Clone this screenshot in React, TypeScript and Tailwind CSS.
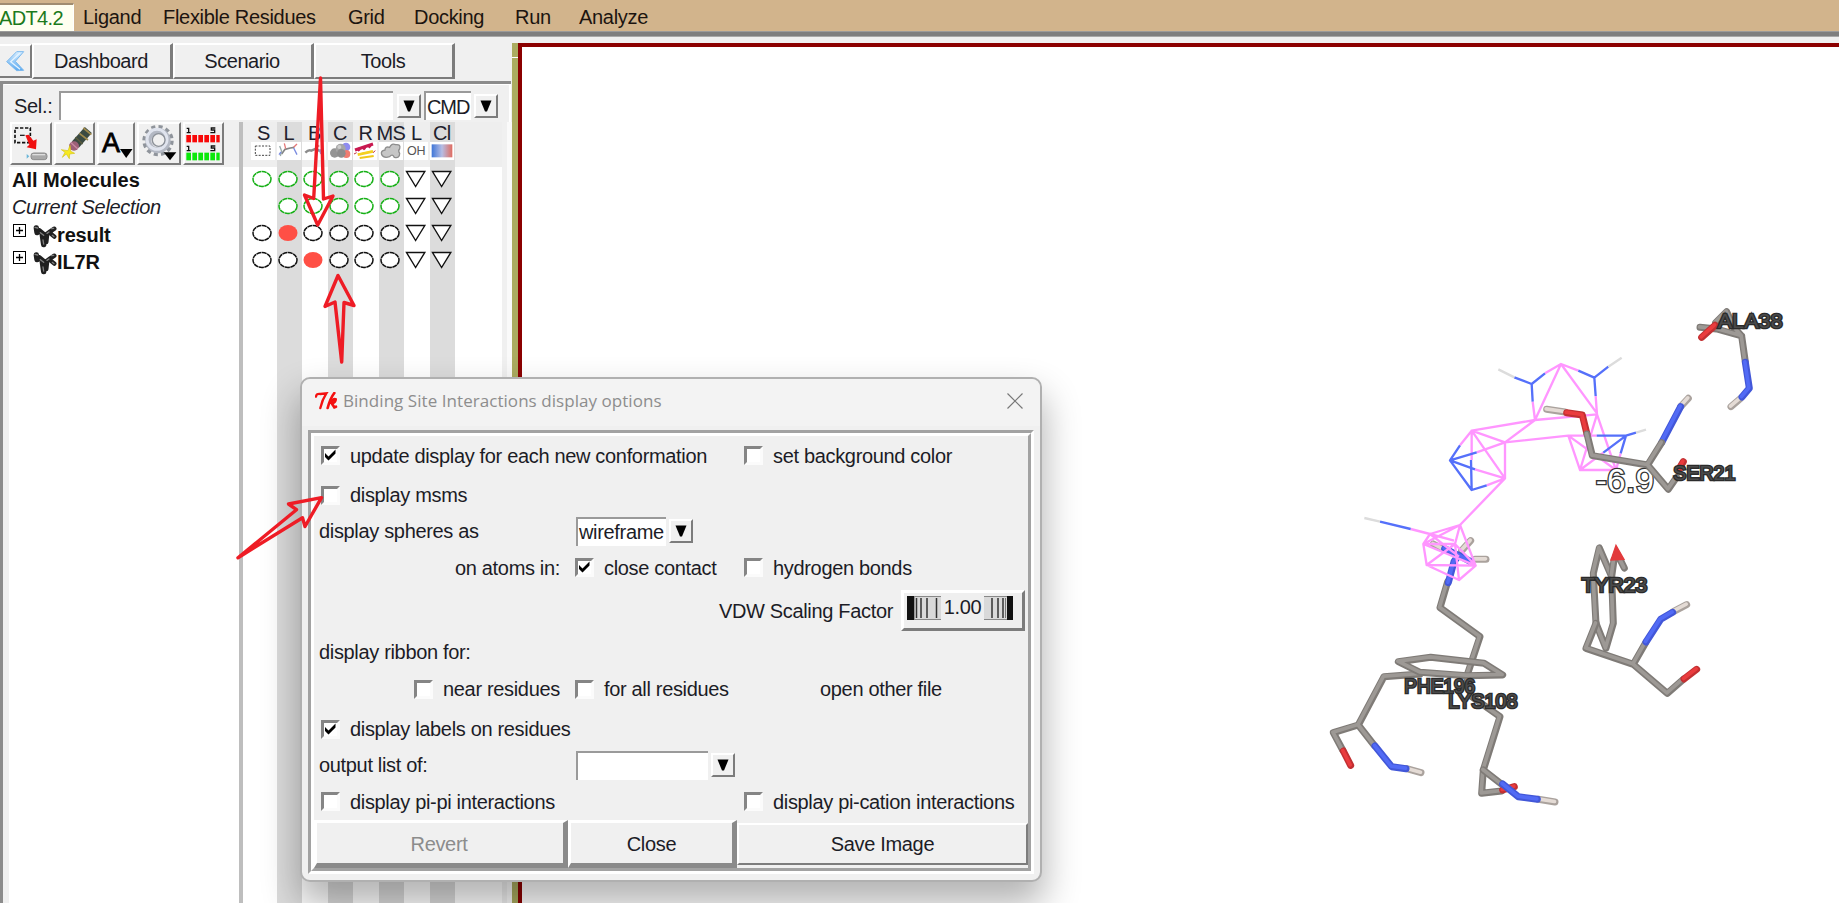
import React from "react";

const raised = "border-2 border-t-white border-l-white border-r-[#7c7c7c] border-b-[#7c7c7c] bg-[#f0f0f0]";

const menus = [
  { label: "Ligand", cls: "w-[80px]" },
  { label: "Flexible Residues", cls: "w-[185px]" },
  { label: "Grid", cls: "w-[66px]" },
  { label: "Docking", cls: "w-[101px]" },
  { label: "Run", cls: "w-[64px]" },
  { label: "Analyze", cls: "w-[90px]" },
];

function MenuBar() {
  return (
    <div className="flex h-[31px] shrink-0 items-end bg-[#d2b48c] text-[#1c1410]">
      <div className="flex h-[28px] w-[74px] items-center border-t-2 border-r border-t-[#a08c70] border-r-white bg-[#fffff0] text-[#1c7a1c]">
        <span className="-mt-px -ml-px tracking-[-0.650px]">ADT4.2</span>
      </div>
      <div className="flex h-[28px] items-center pl-[9px] tracking-[-0.300px]">
        {menus.map((m) => (
          <div key={m.label} className={`shrink-0 whitespace-nowrap ${m.cls}`}>{m.label}</div>
        ))}
      </div>
    </div>
  );
}

function DropButton() {
  return (
    <div className={`flex h-[24px] w-[24px] shrink-0 items-center justify-center ${raised}`}>
      <svg width="12" height="12" viewBox="0 0 12 12"><path d="M0.500 0.500H11.500L7 11.500H5Z" fill="#000" /></svg>
    </div>
  );
}

function Tabs() {
  return (
    <div className="flex h-[36px] items-start">
      <div className={`mt-px flex h-[34px] w-[32px] items-center justify-center ${raised} border-l-0`}>
        <svg width="20" height="22" viewBox="16 148 58 66">
          <defs>
            <linearGradient id="chev" x1="0" y1="0" x2="0" y2="1">
              <stop offset="0" stopColor="#d6edff" /><stop offset="1" stopColor="#5aa9f0" />
            </linearGradient>
          </defs>
          <path d="M71 153L50 153L20 183L50 210L71 209L46 182Z" fill="url(#chev)" stroke="#7ab8ee" strokeWidth="3" strokeLinejoin="round" />
          <path d="M60 157L32 183L60 206" fill="none" stroke="#e4f3ff" strokeWidth="4" />
        </svg>
      </div>
      {["Dashboard", "Scenario", "Tools"].map((t) => (
        <div key={t} className={`flex h-[36px] w-[141px] items-center justify-center pr-[2px] tracking-[-0.450px] ${raised} border-r-[3px]`}>{t}</div>
      ))}
    </div>
  );
}

function Toolbar() {
  return (
    <div className="flex h-[45px] gap-[2px] pl-[6px]">
      <div className={`h-[43px] w-[42px] ${raised}`}>
        <svg width="38" height="39" viewBox="34 42 114 117">
          <rect x="43" y="54" width="46" height="44" fill="none" stroke="#111" strokeWidth="5" strokeDasharray="10 5" />
          <path d="M58 76h14" stroke="#222" strokeWidth="4" />
          <path d="M74 76L84 74L98 92L108 88L106 118L78 112L86 104Z" fill="#f01010" />
          <path d="M78 132l8 7l-8 7z" fill="#6bb6d8" />
          <rect x="91" y="129" width="48" height="20" rx="8" fill="#a9a9a9" stroke="#8c8c8c" strokeWidth="3" />
          <path d="M95 134h38" stroke="#dedede" strokeWidth="4" />
        </svg>
      </div>
      <div className={`h-[43px] w-[41px] ${raised}`}>
        <svg width="37" height="39" viewBox="168 42 111 117">
          <path d="M265 60L226 104" stroke="#3b4a42" strokeWidth="28" />
          <path d="M238 70l26 20M250 54l24 20" stroke="#a08a4c" strokeWidth="5" />
          <path d="M226 82l22 20" stroke="#5c5c3c" strokeWidth="4" />
          <ellipse cx="222" cy="108" rx="15" ry="14" fill="#9d6078" />
          <path d="M213 98l20 18" stroke="#c98aa0" strokeWidth="4" />
          <path d="M184 119L204 122L210 106L212 124L224 130L209 132L208 146L199 132L187 142L195 127Z" fill="#f7ea1e" stroke="#d5c416" strokeWidth="2" />
        </svg>
      </div>
      <div className={`h-[43px] w-[38px] ${raised}`}>
        <div className="flex h-[39px] items-start justify-between pt-[6px] pl-[3px]">
          <span className="text-[27px] leading-none font-normal tracking-normal text-black [-webkit-text-stroke:0.800px_black]">A</span>
          <svg className="-ml-1 self-end pb-[5px]" width="13" height="14" viewBox="0 0 13 9"><path d="M0 0H12.500L6.200 9Z" fill="#000" /></svg>
        </div>
      </div>
      <div className={`h-[43px] w-[44px] ${raised}`}>
        <svg width="40" height="39" viewBox="420 42 120 117">
          <circle cx="477" cy="92" r="41" fill="none" stroke="#8f949b" strokeWidth="12" strokeDasharray="12 9.500" />
          <circle cx="477" cy="92" r="29" fill="none" stroke="#b3b8c3" strokeWidth="18" />
          <circle cx="474" cy="88" r="30" fill="none" stroke="#e0e4ee" strokeWidth="9" />
          <circle cx="479" cy="90" r="19" fill="#f0f0f0" stroke="#8b9098" strokeWidth="4" />
          <path d="M494 127h38l-19 24z" fill="#000" />
        </svg>
      </div>
      <div className={`h-[43px] w-[41px] ${raised}`}>
        <svg width="37" height="39" viewBox="555 42 111 117">
          {[0, 1, 2, 3, 4, 5].map((i) => (
            <g key={i}>
              <rect x={559 + i * 18} y="75" width={i === 5 ? 10 : 14} height="22" fill="#f80808" />
              <rect x={559 + i * 18} y="128" width={i === 5 ? 10 : 14} height="23" fill="#0be80b" />
            </g>
          ))}
          {[52, 106].map((y) => (
            <g key={y} transform={`translate(0 ${y})`} fill="none" stroke="#111" strokeWidth="4">
              <path d="M560 3h6v13M560 16h12" />
              <path d="M646 2h-12v6h10v8h-13" />
            </g>
          ))}
        </svg>
      </div>
    </div>
  );
}

function MolIcon() {
  return (
    <svg width="24" height="24" viewBox="100 340 72 72">
      <g stroke="#202020" strokeLinecap="round" strokeLinejoin="round" fill="none">
        <path d="M110 352L112 366M118 360L138 376M128 374L132 402" strokeWidth="16" />
        <path d="M136 374L152 362L164 354M152 368L164 378M142 376L140 394" strokeWidth="13" />
      </g>
      <path d="M106 350l8 2M122 366l10 8M156 354l6-1M158 374l5 4M130 388l2 12M142 368l6-4" stroke="#808080" strokeWidth="4" strokeLinecap="round" />
    </svg>
  );
}

function TreeItem({ name }: { name: string }) {
  return (
    <div className="flex h-[27px] items-center pl-[4px]">
      <div className="mb-[8px] flex h-[13px] w-[13px] items-center justify-center border border-black">
        <svg width="9" height="9" viewBox="0 0 9 9"><path d="M4.500 1V8M1 4.500H8" stroke="#000" strokeWidth="1.300" /></svg>
      </div>
      <div className="mt-[2px] ml-[7px] flex"><MolIcon /></div>
      <span className="text-[20px] font-bold tracking-[-0.150px] text-[#111]">{name}</span>
    </div>
  );
}

const iconArt: Record<string, React.ReactNode> = {
  S: <rect x="13" y="12" width="44" height="28" fill="none" stroke="#444" strokeWidth="3" strokeDasharray="6 4" />,
  L: (
    <g fill="none" strokeWidth="4">
      <path d="M14 36L24 22L40 18L52 16" stroke="#858585" strokeWidth="5" /><path d="M8 12l6 16-4 14" stroke="#9aa" />
      <path d="M22 4l4 16M50 16l10-10" stroke="#e57878" /><path d="M50 18l10 20M12 30l-6 8" stroke="#7a8be0" />
    </g>
  ),
  B: (
    <g fill="none" strokeWidth="7">
      <path d="M10 32Q20 22 28 26L42 20L54 28" stroke="#8c8c8c" /><path d="M42 12h10" stroke="#e08080" /><path d="M54 22l4 14" stroke="#8f9be0" />
    </g>
  ),
  C: (
    <g>
      <circle cx="54" cy="15" r="13" fill="#8f8cf0" /><circle cx="55" cy="36" r="12" fill="#f07c70" />
      <circle cx="20" cy="33" r="14" fill="#949494" /><circle cx="38" cy="20" r="15" fill="#a6a6a6" /><circle cx="40" cy="34" r="13" fill="#8d8d8d" />
      <circle cx="34" cy="15" r="6" fill="#ccc" />
    </g>
  ),
  R: (
    <g fill="none">
      <path d="M6 24L60 6" stroke="#c81850" strokeWidth="9" /><path d="M14 26l6-6M30 22l6-6M46 16l6-6" stroke="#c81850" strokeWidth="9" />
      <path d="M14 38l46-10" stroke="#f4d020" strokeWidth="8" /><path d="M20 48l42-6" stroke="#f0c818" strokeWidth="6" />
      <path d="M14 32l46-12" stroke="#fff" strokeWidth="3" /><path d="M3 36l8-4M60 32l7-6" stroke="#c03040" strokeWidth="3" />
    </g>
  ),
  MS: (
    <path d="M8 38Q4 26 18 24Q18 12 32 16Q38 2 50 8Q66 6 62 20Q56 26 62 34Q62 50 46 46Q40 34 32 44Q14 50 8 38Z" fill="#c6c6c6" stroke="#8d8d8d" strokeWidth="4" />
  ),
  Cl: (
    <g>
      <defs><linearGradient id="clg"><stop offset="0" stopColor="#3f76d8" /><stop offset=".5" stopColor="#b6bde4" /><stop offset="1" stopColor="#e06c60" /></linearGradient></defs>
      <rect x="5" y="7" width="62" height="39" fill="url(#clg)" />
    </g>
  ),
};

const columns = [
  { id: "S", label: "S" }, { id: "L", label: "L" }, { id: "B", label: "B" }, { id: "C", label: "C" },
  { id: "R", label: "R" }, { id: "MS", label: "MS" }, { id: "OH", label: "L" }, { id: "Cl", label: "Cl" },
];

function Marker({ col, row }: { col: number; row: number }) {
  if (row === 1 && col === 0) return <div className="h-[27px]" />;
  const hot = (row === 2 && col === 1) || (row === 3 && col === 2);
  const color = row < 2 ? "#16b016" : "#111";
  return (
    <div className="flex h-[27px] items-center">
      <svg width="24" height="20" viewBox="0 0 24 20">
        {col > 5 ? (
          <path d="M2.500 2.500H20.800L11.600 17.500Z" fill="#fff" stroke="#111" strokeWidth="1.400" />
        ) : hot ? (
          <ellipse cx="11" cy="10" rx="9.500" ry="8" fill="#ff4f45" />
        ) : (
          <ellipse cx="11" cy="10" rx="9" ry="7.500" fill="#fff" stroke={color} strokeWidth="1.500" strokeDasharray="5 0.500" />
        )}
      </svg>
    </div>
  );
}

function Matrix() {
  return (
    <div className="flex h-full w-[259px] bg-[linear-gradient(#eee_45px,#fff_45px)] pl-[8px]">
      {columns.map((c, i) => (
        <div key={c.id + i} className={`h-full w-[25.500px] shrink-0 ${i % 2 ? "bg-[#dcdcdc]" : ""}`}>
          <div className="-ml-px flex h-[43px] flex-col items-center pt-[1px]">
            <div className="flex h-[19px] items-center justify-center text-[20px] tracking-[-0.700px] whitespace-nowrap text-[#20202c]">{c.label}</div>
            <div className="flex h-[18px] w-[24px] items-center justify-center bg-white">
              {c.id === "OH" ? (
                <span className="text-[12.500px] leading-none tracking-normal text-[#555]">OH</span>
              ) : (
                <svg width="24" height="18" viewBox="0 0 72 54">{iconArt[c.id]}</svg>
              )}
            </div>
          </div>
          {[0, 1, 2, 3].map((r) => <Marker key={r} col={i} row={r} />)}
        </div>
      ))}
    </div>
  );
}

function Sidebar() {
  return (
    <div className="flex w-[512px] shrink-0 flex-col pt-[6px]">
      <Tabs />
      <div className="mt-[2px] flex min-h-0 flex-1 flex-col border-l-[3px] border-[#8c8c8c] pl-px">
        <div className="-ml-px h-[3px] w-[508px] shrink-0 bg-[#8c8c8c]" />
        <div className="flex h-[38px] w-[507px] shrink-0 items-start border-t border-r-2 border-white pt-[6px] pl-[10px]">
          <div className="flex h-[29px] w-[45px] items-center">Sel.:</div>
          <div className="h-[29px] w-[334px] border-t-2 border-l-2 border-[#9a9a9a] bg-white" />
          <div className="ml-[4px] flex h-[29px] items-center"><DropButton /></div>
          <div className="ml-[3px] flex h-[29px] w-[47px] items-center border-t-2 border-l-2 border-[#9a9a9a] bg-white pl-px tracking-[-1.100px]">CMD</div>
          <div className="ml-[3px] flex h-[29px] items-center"><DropButton /></div>
        </div>
        <div className="flex min-h-0 flex-1">
          <div className="flex w-[235px] flex-col">
            <Toolbar />
            <div className="ml-[5px] flex-1 bg-white">
              <div className="flex h-[27px] items-center pb-px pl-[3px] text-[20px] font-bold tracking-[0] text-[#111]">All Molecules</div>
              <div className="flex h-[27px] items-center pb-px pl-[3px] italic">Current Selection</div>
              <TreeItem name="result" />
              <TreeItem name="IL7R" />
            </div>
          </div>
          <div className="w-[4px] bg-[#bebebe]" />
          <Matrix />
          <div className="w-[5px] bg-[#f0f0f0]" />
          <div className="flex-1 bg-[#fafafa]" />
        </div>
      </div>
    </div>
  );
}

const tones: Record<string, [string, string]> = {
  g: ["#7f7b77", "#9d9995"],
  b: ["#4257d8", "#526bf5"],
  r: ["#c23032", "#ea3c3e"],
  w: ["#aaa29d", "#e4dbd5"],
};

function Sticks({ items }: { items: [string, string][] }) {
  return (
    <g fill="none" strokeLinejoin="round" strokeLinecap="round">
      {items.map(([t, d], i) => (
        <g key={i}>
          <path d={d} stroke={tones[t][0]} strokeWidth="21" />
          <path d={d} stroke={tones[t][1]} strokeWidth="11" transform="translate(-1.500 -1.500)" />
        </g>
      ))}
    </g>
  );
}

function Label({ x, y, w, children }: { x: number; y: number; w: number; children: string }) {
  return (
    <text x={x} y={y} textLength={w} lengthAdjust="spacingAndGlyphs" fontSize="60" letterSpacing="0" fill="#4a4a4a" stroke="#2b2b2b" strokeWidth="8" strokeLinejoin="miter" paintOrder="stroke">
      {children}
    </text>
  );
}

const upperSticks: [string, string][] = [
  ["g", "M1050 112L1100 117L1175 138M1097 98L1130 65L1152 112L1175 138L1186 215"],
  ["r", "M1055 142L1095 106"],
  ["w", "M1143 350L1172 325"],
  ["b", "M1186 217L1198 295L1176 321"],
  ["w", "M590 358L645 366"],
  ["w", "M1015 325L992 350"],
  ["b", "M935 458L992 350"],
  ["r", "M650 368L697 375L711 432"],
  ["r", "M985 540L1000 515"],
  ["g", "M711 432L727 497L893 525L935 458M893 525L955 598L980 562"],
];

const lowerSticks: [string, string][] = [
  ["g", "M413 125L390 203L510 290L470 410L485 470L570 530L520 690L515 760L575 753"],
  ["g", "M520 690L575 733"],
  ["r", "M578 750L613 740"],
  ["w", "M685 778L735 786"],
  ["b", "M578 732L625 770L682 778"],
  ["g", "M330 402L222 410L145 555L70 578L98 630M145 555L192 615"],
  ["g", "M265 365L362 352L522 370L578 405L470 407L330 397Z"],
  ["r", "M100 633L122 676"],
  ["w", "M290 686L333 698"],
  ["b", "M195 618L245 680L288 686"],
  ["g", "M868 24L850 100L858 250L888 325L910 250L905 110Z"],
  ["g", "M905 110L912 60M932 62L943 84"],
  ["g", "M858 250L828 325L970 373L1007 308M970 373L1072 460L1120 418"],
  ["w", "M1090 215L1130 194"],
  ["b", "M1008 306L1052 238L1088 217"],
  ["r", "M1122 417L1160 388"],
];

function Viewer() {
  return (
    <div className="min-w-0 flex-1 border-t-4 border-l-4 border-[#8b0000] bg-white">
      <svg width="1317" height="856" viewBox="522 47 1317 856" className="block tracking-normal">
        <g transform="translate(1310 540) scale(0.33333)">
          <Sticks items={lowerSticks} />
          <path d="M903 60L918 16L942 58Z" fill="#e23a3c" stroke="#e23a3c" strokeWidth="4" />
          <Label x={283} y={460} w={212}>PHE196</Label>
          <Label x={415} y={505} w={208}>LYS108</Label>
          <Label x={815} y={157} w={197}>TYR23</Label>
        </g>
        <g transform="translate(1350 290) scale(0.33333)">
          <Sticks items={[["w", "M250 762L280 778"], ["w", "M375 808L408 808"], ["w", "M335 782L362 752"], ["b", "M284 776L325 797L312 815L295 878M325 795L362 815"]]} />
          <g fill="none" strokeWidth="7" strokeLinejoin="round">
            <path stroke="#ff96ff" d="M633 222L555 390M633 222L741 370M585 250L633 222L685 242M548 335L555 390M737 318L741 373L555 390L365 422L465 457L555 390M365 422L465 565L465 457L380 487M365 422L330 466M365 422V510M375 538L465 565L410 586M465 457L655 437H740M655 437L690 540H798L655 437M812 490L798 540M760 488L690 540L741 373L798 540M465 565L330 705" />
            <path stroke="#ff96ff" d="M182 717L240 732L312 752M330 705L240 732L220 762L330 705L315 762L220 762L230 825L327 870L377 827L330 705M315 762L377 827L230 825L315 762L327 870M220 762L377 827M240 732L327 800" />
            <path stroke="#5570fa" d="M493 262L545 282L585 250M545 282L548 335M685 242L733 263L775 230M733 263L737 318M380 487L300 511L330 466M300 511L375 538M300 511L365 600L410 586M363 510L365 600M740 437H828L858 428M828 437L812 490M828 437L760 488M90 695L182 717" />
            <path stroke="#dcdcdc" d="M445 238L493 262M775 230L815 203M858 428L888 419M43 684L90 695" />
          </g>
          <text x="737" y="607" fontSize="100" textLength="175" fill="#fff" stroke="#333" strokeWidth="8" paintOrder="stroke">-6.9</text>
          <Sticks items={upperSticks} />
          <Label x={1103} y={115} w={195}>ALA38</Label>
          <Label x={970} y={570} w={186}>SER21</Label>
        </g>
      </svg>
    </div>
  );
}

function Check({ on, label }: { on?: boolean; label: string }) {
  return (
    <div className="flex shrink-0 items-center whitespace-nowrap">
      <div className="h-[19px] w-[19px] border-[3px] border-t-[#858585] border-r-[#fbfbfb] border-b-[#fbfbfb] border-l-[#858585] bg-white">
        {on && (
          <svg width="13" height="13" viewBox="0 0 13 13"><path d="M1 4L4.500 7.500L11.500 0.500V4.500L4.500 11.500L1 8Z" fill="#000" /></svg>
        )}
      </div>
      <span className="ml-[10px]">{label}</span>
    </div>
  );
}

function VdwWheel() {
  return (
    <div className="flex h-[41px] w-[124px] items-start border-[3px] border-t-white border-r-[#7c7c7c] border-b-[#7c7c7c] border-l-white bg-[#efefef] pt-[3px] pl-[3px]">
      <svg width="34" height="24" viewBox="0 0 34 24">
        <rect width="34" height="24" fill="#d9d9d9" /><path d="M0 .5H34M0 23.500H34" stroke="#888" />
        <rect x="0" y="0" width="7" height="24" fill="#111" /><path d="M7.500 1v22" stroke="#999" /><path d="M9.500 2v20M14 2v20M20 2v20M29.500 2v20" stroke="#333" strokeWidth="1.500" />
      </svg>
      <span className="flex h-[21px] w-[43px] items-center justify-center">1.00</span>
      <svg width="29" height="24" viewBox="0 0 29 24">
        <rect width="29" height="24" fill="#d9d9d9" /><path d="M0 .5H29M0 23.500H29" stroke="#888" />
        <path d="M8 2v20M14 2v20M19 2v20" stroke="#333" strokeWidth="1.500" /><path d="M21.500 2v20" stroke="#777" /><rect x="23" y="0" width="6" height="24" fill="#111" />
      </svg>
    </div>
  );
}

function Dialog() {
  return (
    <div className="absolute top-[377px] left-[300px] flex h-[505px] w-[742px] flex-col rounded-[10px] border-2 border-[#b0b0b0] bg-[#f0f0f0] shadow-[0_20px_36px_2px_rgba(0,0,0,0.3)]">
      <div className="flex h-[47px] shrink-0 items-center rounded-t-[9px] bg-[#f3f3f3] pr-[17px] pb-[4px] pl-[13px]">
        <svg width="23" height="18" viewBox="0 0 69 54" fill="none" stroke="#f41010" strokeLinecap="round">
          <path d="M3 14Q4 4 16 6L34 4Q22 22 16 48" strokeWidth="7" />
          <path d="M58 3Q46 18 38 48" strokeWidth="8" /><path d="M46 32Q56 18 62 22Q62 32 50 34Q54 40 58 46L63 44" strokeWidth="8" />
        </svg>
        <span className="ml-[5px] flex-1 font-['Open_Sans','Noto_Sans',sans-serif] text-[17px] tracking-[0.050px] text-[#8d8d8d]">
          Binding Site Interactions display options
        </span>
        <svg width="16" height="16" viewBox="0 0 16 16"><path d="M0.500 0.500L15.500 15.500M15.500 0.500L0.500 15.500" stroke="#777" strokeWidth="1.200" /></svg>
      </div>
      <div className="mx-[6px] mt-[4px] h-[444px] border-[3px] border-t-[#a2a2a2] border-r-white border-b-white border-l-[#a2a2a2]">
        <div className="flex h-[438px] flex-col border-[3px] border-t-white border-r-[#a2a2a2] border-b-[#a2a2a2] border-l-white tracking-[-0.330px]">
          <div className="flex h-[39px] items-center pl-[7px]">
            <div className="w-[423px]"><Check on label="update display for each new conformation" /></div>
            <Check label="set background color" />
          </div>
          <div className="flex h-[40px] items-center pl-[7px]"><Check label="display msms" /></div>
          <div className="flex h-[32px] items-center pl-[5px]">
            <div className="w-[257px]">display spheres as</div>
            <div className="flex h-[29px] w-[90px] items-center border-t-2 border-l-2 border-[#9a9a9a] bg-white pl-px">wireframe</div>
            <div className="ml-[3px] flex"><DropButton /></div>
          </div>
          <div className="flex h-[41px] items-center pl-[141px]">
            <div className="w-[120px]">on atoms in:</div>
            <div className="w-[169px]"><Check on label="close contact" /></div>
            <Check label="hydrogen bonds" />
          </div>
          <div className="flex h-[45px] items-center justify-end gap-[8px] pr-[3px]">
            <span>VDW Scaling Factor</span>
            <VdwWheel />
          </div>
          <div className="flex h-[37px] items-center pl-[5px]">display ribbon for:</div>
          <div className="flex h-[38px] items-center pl-[100px]">
            <div className="w-[161px]"><Check label="near residues" /></div>
            <div className="w-[245px]"><Check label="for all residues" /></div>
            <span>open other file</span>
          </div>
          <div className="flex h-[42px] items-center pl-[7px]"><Check on label="display labels on residues" /></div>
          <div className="flex h-[30px] items-center pl-[5px]">
            <div className="w-[257px]">output list of:</div>
            <div className="h-[29px] w-[132px] border-t-2 border-l-2 border-[#9a9a9a] bg-white" />
            <div className="ml-[3px] flex"><DropButton /></div>
          </div>
          <div className="flex h-[40px] items-center pt-[3px] pl-[7px]">
            <div className="w-[423px]"><Check label="display pi-pi interactions" /></div>
            <Check label="display pi-cation interactions" />
          </div>
          <div className="flex flex-1 items-center">
            <div className="flex h-[48px] w-[254px] items-center justify-center border-[5px] border-t-white border-t-[3px] border-r-[#8a8a8a] border-b-[#8a8a8a] border-l-white border-l-[3px] pt-[2px] pr-[2px] text-[#8c8c8c]">Revert</div>
            <div className="flex h-[48px] w-[169px] items-center justify-center border-[5px] border-t-white border-t-[3px] border-r-[#8a8a8a] border-b-[#8a8a8a] border-l-white border-l-[3px] pt-[2px]">Close</div>
            <div className={`flex h-[42px] flex-1 items-center justify-center ${raised}`}>Save Image</div>
          </div>
        </div>
      </div>
    </div>
  );
}

function Annotations() {
  return (
    <svg className="pointer-events-none absolute top-0 left-0" width="1839" height="903" viewBox="0 0 1839 903" fill="none" stroke="#ee1c25" strokeWidth="3.400" strokeLinejoin="round">
      <path d="M320.500 78L313.700 198.500L304.500 195L317.700 225L333 196L323.500 199Z" />
      <path d="M338 275.500L325 306.500L335 302L341.700 362L344 302.500L354 305.500Z" />
      <path d="M321.500 497.700L288.500 504L296.500 509.700L238 557.800L302.500 517.700L305 526.500Z" />
    </svg>
  );
}

export default function App() {
  return (
    <div className="relative flex h-[903px] w-full flex-col overflow-hidden bg-[#f0f0f0] font-['Liberation_Sans',Arial,sans-serif] text-[20px] leading-none tracking-[-0.330px] text-[#1c1c26]">
      <MenuBar />
      <div className="h-[6px] shrink-0 border-t border-b border-t-[#9a9a9a] border-b-[#a8a8a8] bg-[#7e7e7e]" />
      <div className="flex min-h-0 flex-1">
        <Sidebar />
        <div className="mt-[6px] w-[6px] shrink-0 bg-[#abac60]">
          <div className="mt-[14px] h-px bg-white" />
        </div>
        <div className="flex min-w-0 flex-1 pt-[6px]"><Viewer /></div>
      </div>
      <Dialog />
      <Annotations />
    </div>
  );
}
